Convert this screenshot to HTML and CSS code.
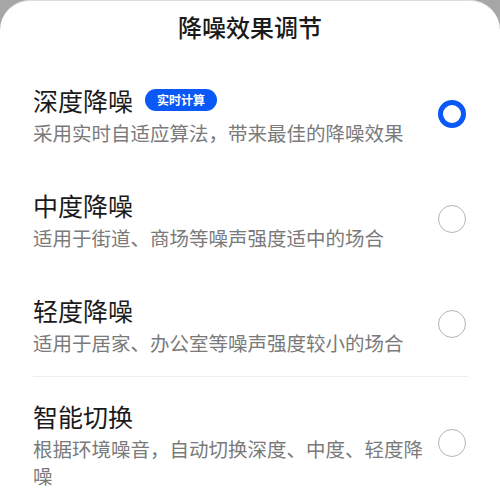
FILE: index.html
```html
<!DOCTYPE html>
<html lang="zh-CN">
<head>
  <meta charset="UTF-8">
  <title>降噪效果调节</title>
  <link rel="stylesheet" href="styles.css">
</head>
<body>
  <div class="sheet">
    <h1 class="sheet-title">降噪效果调节</h1>

    <ul class="options">
      <li class="option">
        <div class="option-text">
          <div class="option-name">深度降噪 <span class="badge">实时计算</span></div>
          <div class="option-desc">采用实时自适应算法，带来最佳的降噪效果</div>
        </div>
        <span class="radio checked"></span>
      </li>
      <li class="option">
        <div class="option-text">
          <div class="option-name">中度降噪</div>
          <div class="option-desc">适用于街道、商场等噪声强度适中的场合</div>
        </div>
        <span class="radio"></span>
      </li>
      <li class="option">
        <div class="option-text">
          <div class="option-name">轻度降噪</div>
          <div class="option-desc">适用于居家、办公室等噪声强度较小的场合</div>
        </div>
        <span class="radio"></span>
      </li>
      <!-- separate group -->
      <li class="divider"></li>
      <li class="option">
        <div class="option-text">
          <div class="option-name">智能切换</div>
          <div class="option-desc">根据环境噪音，自动切换深度、中度、轻度降噪</div>
        </div>
        <span class="radio"></span>
      </li>
    </ul>
  </div>
</body>
</html>
```

FILE: styles.css
```css
html, body {
  height: 100%;
}
body {
  margin: 0;
  background: #a6a6a6;
  font-family: "Noto Sans CJK SC", "Noto Sans", sans-serif;
  overflow: hidden;
}
.sheet {
  min-height: 100%;
  background: #fff;
  border-top: 1px solid #dedede;
  border-radius: 30px 30px 0 0;
  box-sizing: border-box;
}
.sheet-title {
  margin: 0;
  padding: 9px 0 17px;
  font-size: 24px;
  line-height: 34px;
  font-weight: 500;
  text-align: center;
  color: #1a1a1a;
}
.options {
  list-style: none;
  margin: 0;
  padding: 0;
}
.option {
  display: flex;
  align-items: center;
  gap: 12px;
  padding: 20px 34px 20px 33px;
}
.option-text {
  flex: 1;
}
.option-name {
  display: flex;
  align-items: center;
  gap: 12px;
  font-size: 25px;
  line-height: 38px;
  color: #1a1a1a;
}
.option-desc {
  font-size: 19.5px;
  line-height: 27px;
  color: #7a7a7a;
}
.badge {
  height: 22px;
  padding: 0 12px;
  border-radius: 11px;
  background: #0a59f7;
  color: #fff;
  font-size: 12px;
  font-weight: 700;
  line-height: 22px;
}
.radio {
  flex: none;
  width: 28px;
  height: 28px;
  border-radius: 50%;
  border: 1.5px solid #b5b5b5;
  box-sizing: border-box;
}
.radio.checked {
  border: 5px solid #0a59f7;
}
.divider {
  height: 1px;
  margin: 0 32px 0 33px;
  background: #ededed;
}
```
